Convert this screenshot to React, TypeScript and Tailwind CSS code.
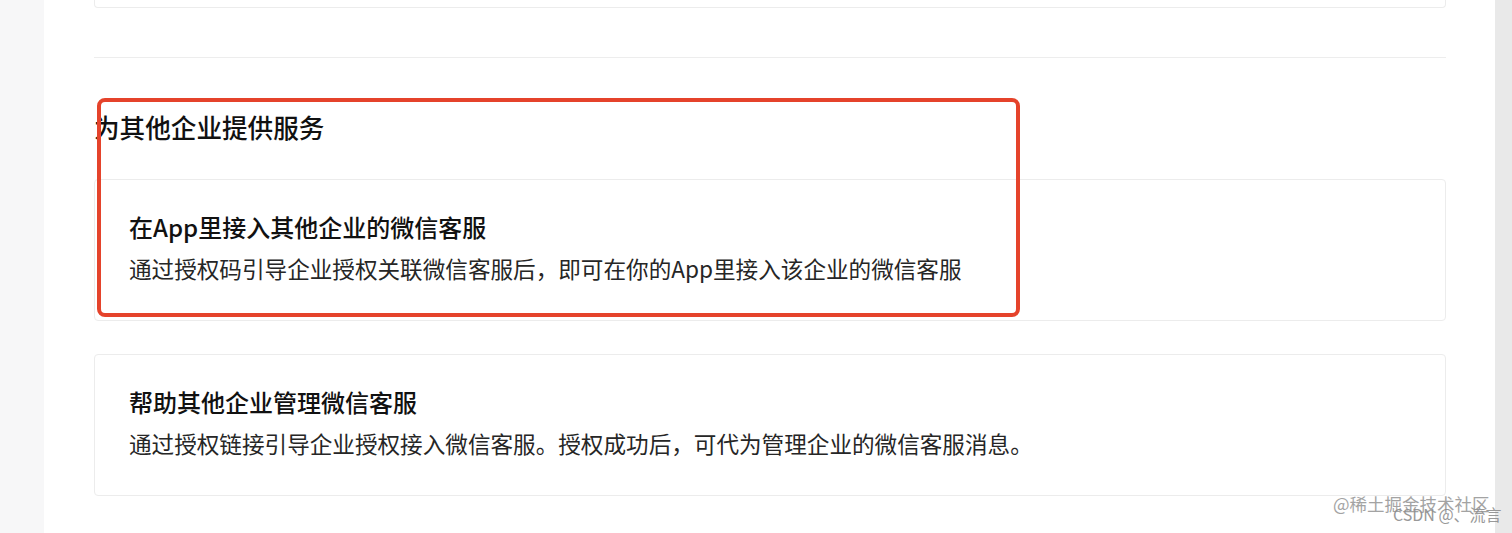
const FONT = "font-['PingFang_SC','Noto_Sans_CJK_SC',sans-serif]";

type Service = { title: string; desc: string };

const services: Service[] = [
  {
    title: "在App里接入其他企业的微信客服",
    desc: "通过授权码引导企业授权关联微信客服后，即可在你的App里接入该企业的微信客服",
  },
  {
    title: "帮助其他企业管理微信客服",
    desc: "通过授权链接引导企业授权接入微信客服。授权成功后，可代为管理企业的微信客服消息。",
  },
];

function ServiceCard({ title, desc }: Service) {
  return (
    <div className="rounded-[4px] border border-[#ececec] bg-white px-[34px] pt-[30px] pb-[36px]">
      <p className="text-[24px] leading-[34px] font-medium text-[#111]">{title}</p>
      <p className="mt-[10px] text-[22.6px] leading-[30px] text-[#262626]">{desc}</p>
    </div>
  );
}

export default function App() {
  return (
    <div className={`flex h-[533px] w-[1512px] overflow-hidden bg-white ${FONT}`}>
      <div className="w-[44px] shrink-0 bg-[#f7f7f8]" />

      <main className="relative flex-1 px-[50px] pr-[49px]">
        {/* bottom edge of the card above */}
        <div className="h-[8px] rounded-b-[4px] border border-t-0 border-[#ececec]" />
        <div className="mt-[49px] h-px bg-[#ededed]" />

        <h2 className="mt-[51px] text-[25.6px] leading-[36px] font-medium text-[#111]">为其他企业提供服务</h2>

        <div className="mt-[34px] flex flex-col gap-[33px]">
          {services.map((s) => (
            <ServiceCard key={s.title} {...s} />
          ))}
        </div>

        {/* annotation frame */}
        <div className="pointer-events-none absolute top-[98px] left-[53px] h-[219px] w-[923px] rounded-[8px] border-[4px] border-[#e5432b]" />
      </main>

      <div className="w-[17px] shrink-0 bg-[#e9e9e9]" />

      {/* watermark */}
      <div className="pointer-events-none absolute top-[495px] left-[1333px] text-[17.5px] leading-[18px] whitespace-nowrap text-[#9a9a9a] opacity-90">
        @稀土掘金技术社区
      </div>
      <div className="pointer-events-none absolute top-[505px] left-[1393px] text-[16px] leading-[18px] whitespace-nowrap text-[#8e8e8e] opacity-90">
        CSDN @、流言
      </div>
    </div>
  );
}
